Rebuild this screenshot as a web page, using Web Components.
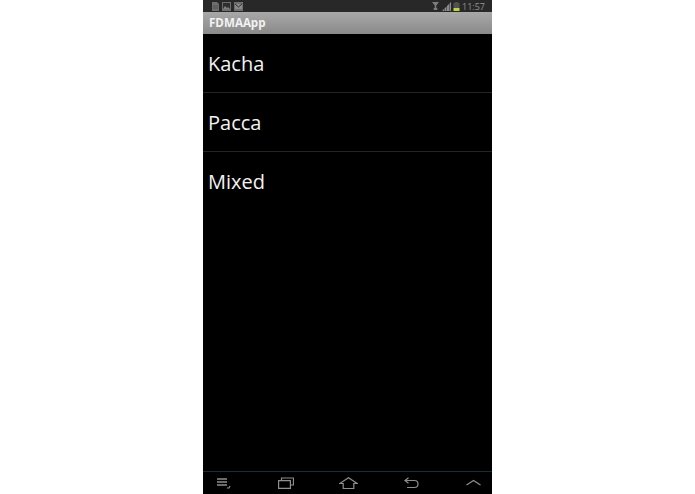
<!DOCTYPE html>
<html>
<head>
<meta charset="utf-8">
<title>FDMAApp</title>
<style>
html, body { margin: 0; height: 100%; background: #fff; }
body { display: flex; justify-content: center; }
</style>
</head>
<body>
<phone-screen>
  <status-bar></status-bar>
  <title-bar>FDMAApp</title-bar>
  <list-row>Kacha</list-row>
  <list-row>Pacca</list-row>
  <list-row last>Mixed</list-row>
  <nav-bar slot="nav"></nav-bar>
</phone-screen>

<script>
class PhoneScreen extends HTMLElement {
    constructor() {
        super();
        this.attachShadow({ mode: 'open' });
        this.shadowRoot.innerHTML = `
            <style>
                :host {
                    display: flex;
                    flex-direction: column;
                    width: 289px;
                    height: 494px;
                    background: #000;
                    font-family: "Open Sans", "Liberation Sans", sans-serif;
                }
                .list { flex: 1; display: flex; flex-direction: column; }
            </style>
            <div class="list"><slot></slot></div>
            <slot name="nav"></slot>
        `;
    }
}

class StatusBar extends HTMLElement {
    constructor() {
        super();
        this.attachShadow({ mode: 'open' });
        this.shadowRoot.innerHTML = `
            <style>
                :host {
                    display: flex;
                    align-items: center;
                    height: 12px;
                    background: #282828;
                    padding: 0 7px 0 9px;
                }
                svg { display: block; }
                .left { display: flex; align-items: center; gap: 3px; }
                .right { margin-left: auto; display: flex; align-items: center; }
                .time { font: 9px "Open Sans", sans-serif; color: #929292; margin-left: 2px; }
            </style>
            <div class="left">
                <svg width="7" height="9" viewBox="0 0 7 9"><path d="M0 0h5l2 2v7H0z" fill="#6e6e6e"/><path d="M1 4h5M1 6h5" stroke="#4a4a4a" stroke-width=".8"/></svg>
                <svg width="9" height="9" viewBox="0 0 9 9"><rect width="9" height="9" fill="#6e6e6e"/><rect x="1" y="1" width="7" height="6" fill="#2e2e2e"/><path d="M1 7l2-3 2 2 1-1 2 2z" fill="#808080"/></svg>
                <svg width="9" height="9" viewBox="0 0 9 9"><rect width="9" height="9" fill="#6e6e6e"/><rect x="1" y="2" width="7" height="5" fill="#8a8a8a"/><path d="M1 2l3.500 3L8 2" stroke="#2e2e2e" fill="none"/></svg>
            </div>
            <div class="right">
                <svg width="7" height="8" viewBox="0 0 7 8" style="margin-right:3px"><path d="M0 0h7L4.300 3.500V6h1v2H1.700V6h1V3.500z" fill="#7c7c7c"/></svg>
                <svg width="9" height="9" viewBox="0 0 9 9" style="margin-right:2px"><path d="M0 9L2 7v2zM2.500 9V6.500L4.500 4.500V9zM5 9V4L7 2v7zM7.500 9V1.500L9 0v9z" fill="#8c8c8c"/></svg>
                <svg width="7" height="9" viewBox="0 0 7 9"><path d="M2 0h3v1h1.500v5H.5V1H2z" fill="#505050"/><rect x=".5" y="6" width="6" height="3" fill="#b9d83a"/></svg>
                <span class="time">11:57</span>
            </div>
        `;
    }
}

class TitleBar extends HTMLElement {
    constructor() {
        super();
        this.attachShadow({ mode: 'open' });
        this.shadowRoot.innerHTML = `
            <style>
                :host {
                    display: flex;
                    align-items: center;
                    box-sizing: border-box;
                    height: 22px;
                    padding: 0 0 1px 6px;
                    background: linear-gradient(#a8a8a8, #8a8a8a);
                    color: #f2f2f2;
                    font: bold 11.6px "Open Sans", sans-serif;
                }
            </style>
            <slot></slot>
        `;
    }
}

class ListRow extends HTMLElement {
    constructor() {
        super();
        this.attachShadow({ mode: 'open' });
        this.shadowRoot.innerHTML = `
            <style>
                :host {
                    display: flex;
                    align-items: center;
                    box-sizing: border-box;
                    height: 59px;
                    padding: 0 0 0 5px;
                    border-bottom: 1px solid #242424;
                    color: #f2f2f2;
                    font: 20px "Open Sans", sans-serif;
                }
                :host([last]) { border-bottom: 0; }
            </style>
            <slot></slot>
        `;
    }
}

class NavBar extends HTMLElement {
    constructor() {
        super();
        this.attachShadow({ mode: 'open' });
        this.shadowRoot.innerHTML = `
            <style>
                :host {
                    display: flex;
                    justify-content: space-between;
                    align-items: flex-start;
                    box-sizing: border-box;
                    height: 23px;
                    padding: 5px 11px 0 13px;
                    border-top: 1px solid #182d36;
                    background: #000;
                }
                svg { display: block; fill: none; stroke: #8e8e8e; stroke-width: 1.2; }
                .home { margin-left: -2px; }
            </style>
            <svg width="15" height="12" viewBox="0 0 15 12"><path d="M1 2h10M1 5h10M1 8h10" stroke-width="1.4"/><path d="M11 11h2l1-2"/></svg>
            <svg width="16" height="12" viewBox="0 0 16 12"><path d="M.6 3.600h11.800v7.800H.6zM3.500 3V1h12v7H13"/></svg>
            <svg class="home" width="19" height="12" viewBox="0 0 19 12"><path d="M.8 6.500L9.500 .8l8.700 5.700h-3.400v5H4.200v-5z"/></svg>
            <svg width="15" height="12" viewBox="0 0 15 12"><path d="M1 3.500h9.500a3.500 3.500 0 0 1 0 7H3M4.500 .8L1 3.500l3.500 2.700"/></svg>
            <svg width="15" height="12" viewBox="0 0 15 12"><path d="M.5 8L7.500 3.500 14.500 8"/></svg>
        `;
    }
}

customElements.define('phone-screen', PhoneScreen);
customElements.define('status-bar', StatusBar);
customElements.define('title-bar', TitleBar);
customElements.define('list-row', ListRow);
customElements.define('nav-bar', NavBar);
</script>
</body>
</html>
